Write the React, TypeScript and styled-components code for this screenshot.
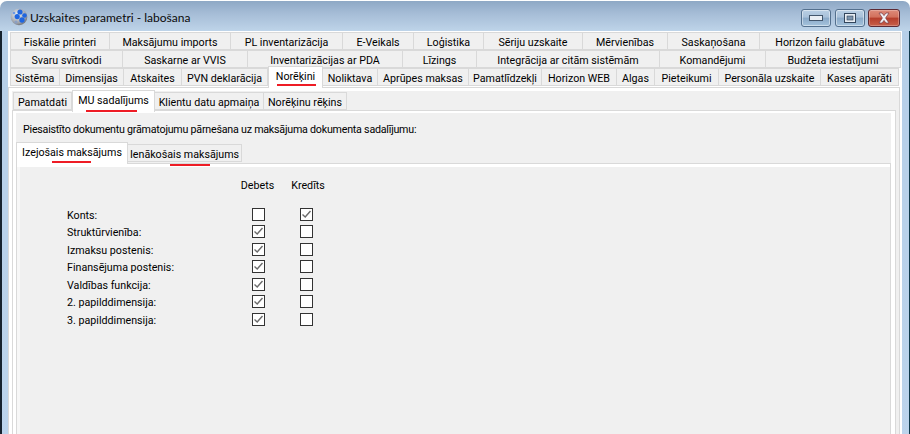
import React from "react";
import styled, { createGlobalStyle } from "styled-components";

const Global = createGlobalStyle`
  html, body { margin: 0; padding: 0; background: #fff; overflow: hidden; }
  body { font-family: "Roboto", "Liberation Sans", sans-serif; font-size: 10.7px; color: #000; }
`;

const Window = styled.div`
  height: 433px;
  margin-top: 1px;
  border-radius: 7px 7px 0 0;
  overflow: hidden;
  display: flex;
  flex-direction: column;
  padding: 0 8px 0 8px;
  background:
    linear-gradient(#16222e, #16222e) 0 30px / 2px 100% no-repeat,
    linear-gradient(#0f3a4c, #0f3a4c) right 30px / 1px 100% no-repeat,
    linear-gradient(#b6cfe8, #bcd4ec) 0 30px / 100% 100% no-repeat,
    linear-gradient(#8ea8c5 0, #a5bcd6 12px, #bed4e9 30px);
`;

const TitleBar = styled.div`
  height: 30px;
  box-sizing: border-box;
  flex: none;
  display: flex;
  align-items: center;
  gap: 2px;
  padding: 2px 0 0 2px;
  font-family: "Lato", "Open Sans", sans-serif;
  font-size: 12px;
`;

const TitleText = styled.span`
  color: #0a0a0a;
  white-space: nowrap;
`;

const Controls = styled.div`
  margin-left: auto;
  margin-right: 2px;
  display: flex;
  align-items: center;
  height: 18px;
  margin-top: 2px;
`;

const CtlButton = styled.div<{ $w: number; $gap: number; $close?: boolean }>`
  width: ${(p) => p.$w}px;
  height: 18px;
  box-sizing: border-box;
  margin-left: ${(p) => p.$gap}px;
  border: 1px solid ${(p) => (p.$close ? "#5d2a34" : "#54708e")};
  border-radius: 3px;
  box-shadow: inset 0 0 0 1px rgba(255, 255, 255, ${(p) => (p.$close ? 0.25 : 0.45)});
  background: ${(p) =>
    p.$close
      ? "linear-gradient(#dd8b7a 0, #d2705c 45%, #b53d2b 50%, #c8604a 100%)"
      : "linear-gradient(#b9cfe4 0, #a9c1da 45%, #8aa9c8 50%, #a5c3dc 100%)"};
  display: flex;
  align-items: center;
  justify-content: center;
`;

const Client = styled.div`
  flex: 1;
  min-height: 0;
  background: #fff;
  display: flex;
  flex-direction: column;
  padding-top: 1px;
  width: 894px;
`;

const TabRow = styled.div<{ $left?: number }>`
  display: flex;
  height: 18px;
  flex: none;
  padding-left: ${(p) => p.$left ?? 2}px;
  align-items: flex-start;
  position: relative;
`;

const Tab = styled.div<{ $w: number; $active?: boolean; $h?: number }>`
  position: relative;
  box-sizing: border-box;
  flex: none;
  width: ${(p) => p.$w}px;
  height: ${(p) => (p.$active ? (p.$h ?? 18) + 4 : p.$h ?? 18)}px;
  margin-top: ${(p) => (p.$active ? -2 : 0)}px;
  background: ${(p) => (p.$active ? "#fff" : "#f0f0f0")};
  border: 1px solid #d9d9d9;
  border-left-width: ${(p) => (p.$active ? 1 : 0)}px;
  border-bottom-width: ${(p) => (p.$active ? 0 : 1)}px;
  display: flex;
  align-items: center;
  justify-content: center;
  white-space: nowrap;
  z-index: ${(p) => (p.$active ? 2 : 0)};
  padding-top: ${(p) => (p.$active ? 0 : 2)}px;
  padding-bottom: ${(p) => (p.$active ? 3 : 0)}px;
  &:first-child { border-left-width: 1px; }
`;

const Mark = styled.span<{ $left: number; $w: number; $top: number }>`
  position: absolute;
  left: ${(p) => p.$left}px;
  top: ${(p) => p.$top}px;
  width: ${(p) => p.$w}px;
  height: 2px;
  background: #ee1c25;
`;

const PaneOne = styled.div`
  flex: 1;
  min-height: 0;
  margin-top: 1px;
  margin-right: 2px;
  border: 1px solid #d9d9d9;
  border-bottom: 0;
  background: #f0f0f0;
  box-shadow: inset 0 3px 0 #fff, inset 3px 0 0 #fff;
  padding: 4px 3px 0 3px;
  display: flex;
  flex-direction: column;
  position: relative;
`;

const SubRow = styled(TabRow)`
  padding-left: 1px;
  height: 18px;
`;

const PaneTwo = styled.div`
  flex: 1;
  min-height: 0;
  border: 1px solid #d9d9d9;
  border-bottom: 0;
  background: #f0f0f0;
  box-shadow: inset 0 2px 0 #fff, inset 3px 0 0 #fff, inset -4px 0 0 #fff;
  padding: 11px 4px 0 3px;
  display: flex;
  flex-direction: column;
`;

const Message = styled.div`
  height: 16px;
  line-height: 16px;
  padding-left: 7px;
  white-space: nowrap;
  letter-spacing: -0.23px;
`;

const InnerRow = styled(TabRow)`
  padding-left: 0;
  margin-top: 6px;
  height: 18px;
`;

const PaneThree = styled.div`
  flex: 1;
  min-height: 0;
  margin-top: 1px;
  border: 1px solid #d9d9d9;
  border-bottom: 0;
  background: #f0f0f0;
  box-shadow: inset 0 3px 0 #fff, inset 3px 0 0 #f7f7f7;
  padding: 13px 0 0 50px;
`;

const Grid = styled.div`
  display: grid;
  grid-template-columns: 185px 13px 35px 13px;
  grid-template-rows: 28.5px repeat(7, 17.5px);
  align-items: center;
`;

const Header = styled.div<{ $pl?: number; $pr?: number }>`
  display: flex;
  justify-content: center;
  align-self: start;
  white-space: nowrap;
  height: 16px;
  line-height: 16px;
  padding: 1px ${(p) => p.$pr ?? 0}px 0 ${(p) => p.$pl ?? 0}px;
`;

const Label = styled.div`
  white-space: nowrap;
  line-height: 16px;
  padding-top: 3px;
`;

const Box = styled.div`
  width: 13px;
  height: 13px;
  box-sizing: border-box;
  border: 1px solid #333;
  background: #fff;
  display: flex;
  align-items: center;
  justify-content: center;
`;

const IconSlot = styled.svg`
  flex: none;
  display: block;
`;

const Check = ({ on }: { on: boolean }) => (
  <Box>
    {on && (
      <svg width="11" height="11" viewBox="0 0 11 11">
        <polyline points="1.5,5.5 4.2,8 9.5,2" fill="none" stroke="#6b6b6b" strokeWidth="1.4" />
      </svg>
    )}
  </Box>
);

const AppIcon = () => (
  <IconSlot width="18" height="18" viewBox="0 0 18 18">
    <defs>
      <radialGradient id="sph" cx="0.4" cy="0.35" r="0.75">
        <stop offset="0" stopColor="#eef2f6" />
        <stop offset="0.7" stopColor="#9a9ea6" />
        <stop offset="1" stopColor="#55585f" />
      </radialGradient>
    </defs>
    <circle cx="9" cy="9" r="8.3" fill="url(#sph)" />
    <circle cx="10" cy="4" r="2.6" fill="#1f66e0" />
    <circle cx="14.5" cy="7.5" r="2.3" fill="#1f66e0" />
    <circle cx="7.2" cy="8.6" r="2.6" fill="#1f66e0" />
    <circle cx="12" cy="12" r="2.7" fill="#1f66e0" />
    <circle cx="4" cy="5" r="1.3" fill="#6f9be4" />
    <circle cx="6" cy="14" r="1.5" fill="#8a9fc4" />
  </IconSlot>
);

type T = { t: string; w: number; active?: boolean };

const row1: T[] = [
  { t: "Fiskālie printeri", w: 100 },
  { t: "Maksājumu imports", w: 121 },
  { t: "PL inventarizācija", w: 112 },
  { t: "E-Veikals", w: 71 },
  { t: "Loģistika", w: 70 },
  { t: "Sēriju uzskaite", w: 99 },
  { t: "Mērvienības", w: 85 },
  { t: "Saskaņošana", w: 92 },
  { t: "Horizon failu glabātuve", w: 141 },
];
const row2: T[] = [
  { t: "Svaru svītrkodi", w: 113 },
  { t: "Saskarne ar VVIS", w: 125 },
  { t: "Inventarizācijas ar PDA", w: 155 },
  { t: "Līzings", w: 74 },
  { t: "Integrācija ar citām sistēmām", w: 183 },
  { t: "Komandējumi", w: 106 },
  { t: "Budžeta iestatījumi", w: 135 },
];
const row3: T[] = [
  { t: "Sistēma", w: 50 },
  { t: "Dimensijas", w: 64 },
  { t: "Atskaites", w: 58 },
  { t: "PVN deklarācija", w: 86 },
  { t: "Norēķini", w: 55, active: true },
  { t: "Noliktava", w: 55 },
  { t: "Aprūpes maksas", w: 91 },
  { t: "Pamatlīdzekļi", w: 73 },
  { t: "Horizon WEB", w: 75 },
  { t: "Algas", w: 38 },
  { t: "Pieteikumi", w: 64 },
  { t: "Personāla uzskaite", w: 102 },
  { t: "Kases aparāti", w: 78 },
];
const rows: [string, boolean, boolean][] = [
  ["Konts:", false, true],
  ["Struktūrvienība:", true, false],
  ["Izmaksu postenis:", true, false],
  ["Finansējuma postenis:", true, false],
  ["Valdības funkcija:", true, false],
  ["2. papilddimensija:", true, false],
  ["3. papilddimensija:", true, false],
];

export default function App() {
  return (
    <>
      <Global />
      <Window>
        <TitleBar>
          <AppIcon />
          <TitleText>Uzskaites parametri - labošana</TitleText>
          <Controls>
            <CtlButton $w={30} $gap={0}>
              <svg width="14" height="6" viewBox="0 0 14 6">
                <rect x="0.5" y="0.5" width="13" height="5" fill="#e8edf3" stroke="#43566c" />
              </svg>
            </CtlButton>
            <CtlButton $w={30} $gap={4}>
              <svg width="12" height="10" viewBox="0 0 12 10">
                <rect x="0.5" y="0.5" width="11" height="9" fill="#e8edf3" stroke="#33465c" />
                <rect x="3" y="3" width="6" height="4" fill="#7d95ae" stroke="#33465c" strokeWidth="0.6" />
              </svg>
            </CtlButton>
            <CtlButton $w={32} $gap={3} $close>
              <svg width="16" height="12" viewBox="0 0 16 12">
                <path d="M3 1h3l2 2.6L10 1h3l-3.4 5L13 11h-3L8 8.4 6 11H3l3.4-5z" fill="#f1f1f4" stroke="#7a3a44" strokeWidth="0.7" />
              </svg>
            </CtlButton>
          </Controls>
        </TitleBar>
        <Client>
          <TabRow>{row1.map((x) => <Tab key={x.t} $w={x.w}>{x.t}</Tab>)}</TabRow>
          <TabRow>{row2.map((x) => <Tab key={x.t} $w={x.w}>{x.t}</Tab>)}</TabRow>
          <TabRow>
            {row3.map((x) => (
              <Tab key={x.t} $w={x.w} $active={x.active}>
                {x.t}
                {x.active && <Mark $left={8} $w={39} $top={17} />}
              </Tab>
            ))}
          </TabRow>
          <PaneOne>
            <SubRow>
              <Tab $w={59}>Pamatdati</Tab>
              <Tab $w={83} $active>
                MU sadalījums
                <Mark $left={13} $w={51} $top={19} />
              </Tab>
              <Tab $w={109}>Klientu datu apmaiņa</Tab>
              <Tab $w={83}>Norēķinu rēķins</Tab>
            </SubRow>
            <PaneTwo>
              <Message>Piesaistīto dokumentu grāmatojumu pārnešana uz maksājuma dokumenta sadalījumu:</Message>
              <InnerRow>
                <Tab $w={112} $active>
                  Izejošais maksājums
                  <Mark $left={35} $w={39} $top={18} />
                </Tab>
                <Tab $w={114}>
                  Ienākošais maksājums
                  <Mark $left={42} $w={40} $top={19} />
                </Tab>
              </InnerRow>
              <PaneThree>
                <Grid>
                  <span />
                  <Header $pr={2}>Debets</Header>
                  <span />
                  <Header $pl={3}>Kredīts</Header>
                  {rows.map(([l, a, b]) => (
                    <React.Fragment key={l}>
                      <Label>{l}</Label>
                      <Check on={a} />
                      <span />
                      <Check on={b} />
                    </React.Fragment>
                  ))}
                </Grid>
              </PaneThree>
            </PaneTwo>
          </PaneOne>
        </Client>
      </Window>
    </>
  );
}
